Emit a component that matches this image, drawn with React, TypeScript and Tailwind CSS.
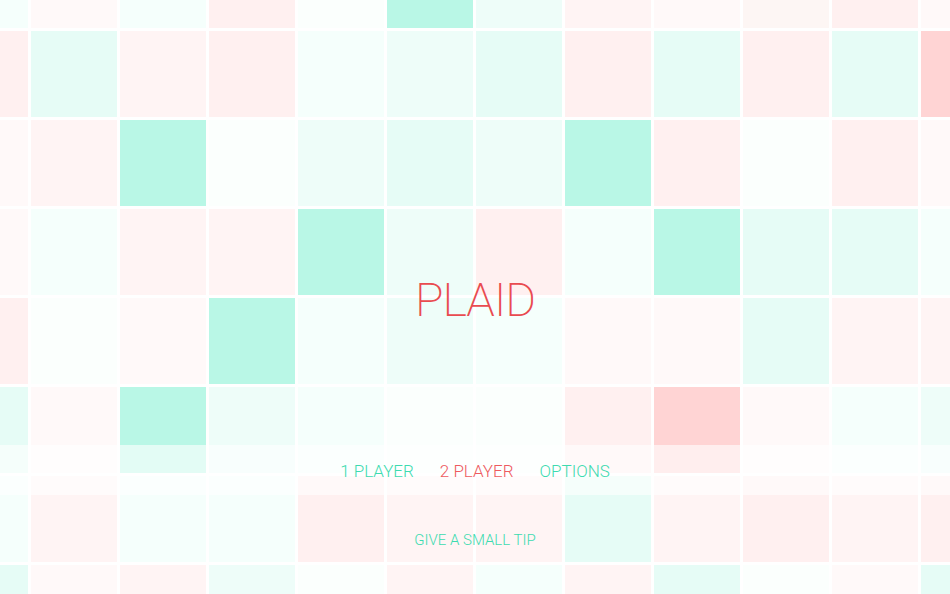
import React from "react";

// palette of tile tints
const tone: Record<string, string> = {
  A: "bg-[#b9f7e6]",
  B: "bg-[#e6fcf6]",
  C: "bg-[#eefdf9]",
  D: "bg-[#f5fffc]",
  W: "bg-[#fbfffd]",
  P: "bg-[#ffd4d4]",
  Q: "bg-[#fff0f0]",
  R: "bg-[#fff4f4]",
  S: "bg-[#fff9f9]",
  X: "bg-[#fdf6f4]",
};

const rows = [
  "DSDQWACRSXQS",
  "QBRQDCBQBQBP",
  "SRAWCBCAQWQS",
  "SDRRACQDABBD",
  "QWSADCDSSBRR",
  "BSACDWWQPSDC",
  "DRDDQRRBRQRQ",
  "BSRCWRDRBWSB",
];

export default function App() {
  return (
    <div className="relative w-full h-screen overflow-hidden bg-white font-['Roboto',sans-serif]">
      <div className="grid grid-cols-[repeat(12,86px)] auto-rows-[86px] gap-[3px] -ml-[58px] -mt-[58px]">
        {rows.map((row, r) =>
          row.split("").map((k, c) => <div key={`${r}-${c}`} className={tone[k]} />)
        )}
      </div>

      {/* title + menu lie over the plaid */}
      <div className="absolute inset-0 flex flex-col items-center pt-[276px]">
        <h1 className="h-[48px] text-[47px] leading-[48px] font-[200] text-[#e94b50] tracking-[-1px]">
          PLAID
        </h1>

        <div className="mt-[121px] w-full h-[50px] bg-white/60 flex items-center justify-center gap-[26px] text-[17px] leading-none font-light pt-[2px]">
          <span className="text-[#3ddbb0]">1 PLAYER</span>
          <span className="text-[#ee5a5e]">2 PLAYER</span>
          <span className="text-[#3ddbb0]">OPTIONS</span>
        </div>

        <div className="mt-[38px] text-[15px] leading-none font-light text-[#3ddbb0]">
          GIVE A SMALL TIP
        </div>
      </div>
    </div>
  );
}
